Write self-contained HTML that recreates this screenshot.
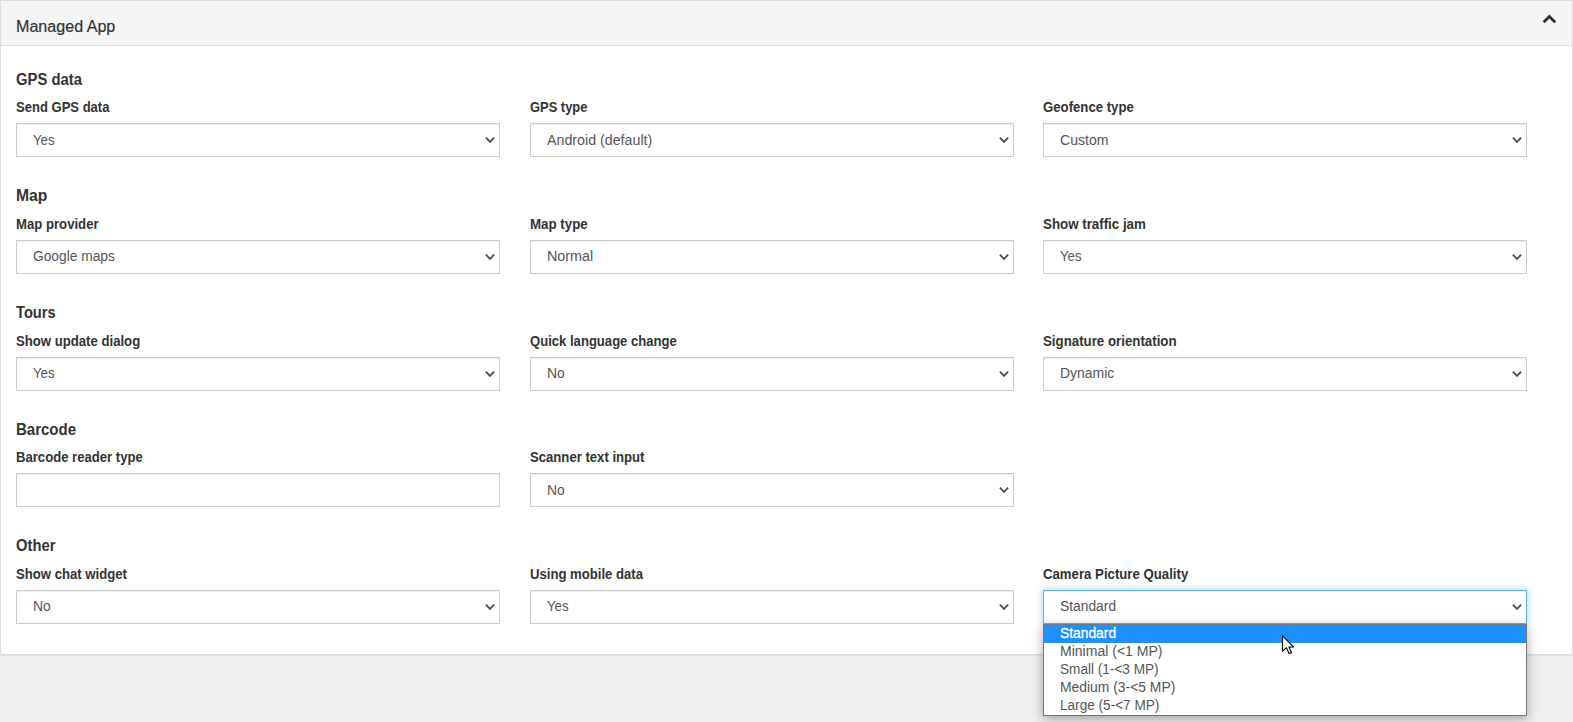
<!DOCTYPE html>
<html><head><meta charset="utf-8">
<style>
*{box-sizing:border-box;margin:0;padding:0}
html,body{width:1573px;height:722px;overflow:hidden;background:#efefef;font-family:"Liberation Sans",sans-serif;}
.panel{position:absolute;left:0;top:0;width:1573px;height:655px;background:#fff;border:1px solid #ddd;border-radius:0 0 2px 2px;box-shadow:0 1px 1px rgba(0,0,0,.05);}
.hd{position:absolute;left:1px;top:1px;width:1571px;height:45px;background:#f5f5f5;border-bottom:1px solid #ddd;}
.t{position:absolute;white-space:nowrap;color:#333;line-height:1;transform-origin:0 0;}
.title{font-size:16px;-webkit-text-stroke:.2px #333;}
.sec{font-size:16px;font-weight:bold;}
.lab{font-size:14px;font-weight:bold;}
.val{font-size:14px;color:#555;}
.opt{font-size:14px;color:#555;}
.optsel{font-size:14px;color:#fff;-webkit-text-stroke:.3px #fff;}
.sel{position:absolute;width:484px;height:34px;border:1px solid #ccc;background:#fff;box-shadow:inset 0 1px 1px rgba(0,0,0,.075);}
.sel.focus{border-color:#66afe9;box-shadow:inset 0 1px 1px rgba(0,0,0,.075),0 0 8px rgba(102,175,233,.6);}
.car{position:absolute;width:12px;height:8px;}
.dd{position:absolute;left:1043px;top:624px;width:484px;height:92px;background:#fff;border:1px solid #767676;box-shadow:0 3px 11px rgba(0,0,0,.33);}
.hl{position:absolute;left:1044px;top:625px;width:482px;height:18px;background:#1e90ff;}
</style></head><body>
<div class="panel"></div>
<div class="hd"></div>
<div class="t title" style="left:16px;top:19px;transform:scaleX(1.0056);">Managed App</div>
<svg style="position:absolute;left:1540px;top:12px" width="20" height="14" viewBox="1540 12 20 14"><path d="M1549.4 14.5 L1556.2 21.3 L1554.2 23.3 L1549.4 18.5 L1544.6 23.3 L1542.6 21.3 Z" fill="#333"/></svg>
<div class="t sec" style="left:16.3px;top:72px;transform:scaleX(0.9273);">GPS data</div>
<div class="t lab" style="left:16.3px;top:100px;transform:scaleX(0.9312);">Send GPS data</div>
<div class="sel" style="left:16px;top:123px"></div>
<div class="t val" style="left:33px;top:133px;transform:scaleX(0.9458);">Yes</div>
<svg class="car" style="left:484px;top:136px" viewBox="0 0 12 8"><path d="M1.9 1.7 L6 5.8 L10.1 1.7" fill="none" stroke="#505050" stroke-width="1.9"/></svg>
<div class="t lab" style="left:530.3px;top:100px;transform:scaleX(0.9223);">GPS type</div>
<div class="sel" style="left:530px;top:123px"></div>
<div class="t val" style="left:547px;top:133px;transform:scaleX(1.0171);">Android (default)</div>
<svg class="car" style="left:998px;top:136px" viewBox="0 0 12 8"><path d="M1.9 1.7 L6 5.8 L10.1 1.7" fill="none" stroke="#505050" stroke-width="1.9"/></svg>
<div class="t lab" style="left:1043.3px;top:100px;transform:scaleX(0.9415);">Geofence type</div>
<div class="sel" style="left:1043px;top:123px"></div>
<div class="t val" style="left:1060px;top:133px;transform:scaleX(1.0069);">Custom</div>
<svg class="car" style="left:1511px;top:136px" viewBox="0 0 12 8"><path d="M1.9 1.7 L6 5.8 L10.1 1.7" fill="none" stroke="#505050" stroke-width="1.9"/></svg>
<div class="t sec" style="left:16.3px;top:188px;transform:scaleX(0.9835);">Map</div>
<div class="t lab" style="left:16.3px;top:217px;transform:scaleX(0.9392);">Map provider</div>
<div class="sel" style="left:16px;top:240px"></div>
<div class="t val" style="left:33px;top:249px;transform:scaleX(0.9824);">Google maps</div>
<svg class="car" style="left:484px;top:253px" viewBox="0 0 12 8"><path d="M1.9 1.7 L6 5.8 L10.1 1.7" fill="none" stroke="#505050" stroke-width="1.9"/></svg>
<div class="t lab" style="left:530.3px;top:217px;transform:scaleX(0.9509);">Map type</div>
<div class="sel" style="left:530px;top:240px"></div>
<div class="t val" style="left:547px;top:249px;transform:scaleX(1.0248);">Normal</div>
<svg class="car" style="left:998px;top:253px" viewBox="0 0 12 8"><path d="M1.9 1.7 L6 5.8 L10.1 1.7" fill="none" stroke="#505050" stroke-width="1.9"/></svg>
<div class="t lab" style="left:1043.3px;top:217px;transform:scaleX(0.9510);">Show traffic jam</div>
<div class="sel" style="left:1043px;top:240px"></div>
<div class="t val" style="left:1060px;top:249px;transform:scaleX(0.9458);">Yes</div>
<svg class="car" style="left:1511px;top:253px" viewBox="0 0 12 8"><path d="M1.9 1.7 L6 5.8 L10.1 1.7" fill="none" stroke="#505050" stroke-width="1.9"/></svg>
<div class="t sec" style="left:16.3px;top:305px;transform:scaleX(0.9174);">Tours</div>
<div class="t lab" style="left:16.3px;top:334px;transform:scaleX(0.9391);">Show update dialog</div>
<div class="sel" style="left:16px;top:357px"></div>
<div class="t val" style="left:33px;top:366px;transform:scaleX(0.9458);">Yes</div>
<svg class="car" style="left:484px;top:370px" viewBox="0 0 12 8"><path d="M1.9 1.7 L6 5.8 L10.1 1.7" fill="none" stroke="#505050" stroke-width="1.9"/></svg>
<div class="t lab" style="left:530.3px;top:334px;transform:scaleX(0.9343);">Quick language change</div>
<div class="sel" style="left:530px;top:357px"></div>
<div class="t val" style="left:547px;top:366px;transform:scaleX(0.9936);">No</div>
<svg class="car" style="left:998px;top:370px" viewBox="0 0 12 8"><path d="M1.9 1.7 L6 5.8 L10.1 1.7" fill="none" stroke="#505050" stroke-width="1.9"/></svg>
<div class="t lab" style="left:1043.3px;top:334px;transform:scaleX(0.9486);">Signature orientation</div>
<div class="sel" style="left:1043px;top:357px"></div>
<div class="t val" style="left:1060px;top:366px;transform:scaleX(0.9971);">Dynamic</div>
<svg class="car" style="left:1511px;top:370px" viewBox="0 0 12 8"><path d="M1.9 1.7 L6 5.8 L10.1 1.7" fill="none" stroke="#505050" stroke-width="1.9"/></svg>
<div class="t sec" style="left:16.3px;top:422px;transform:scaleX(0.9380);">Barcode</div>
<div class="t lab" style="left:16.3px;top:450px;transform:scaleX(0.9364);">Barcode reader type</div>
<div class="sel" style="left:16px;top:473px"></div>
<div class="t lab" style="left:530.3px;top:450px;transform:scaleX(0.9373);">Scanner text input</div>
<div class="sel" style="left:530px;top:473px"></div>
<div class="t val" style="left:547px;top:483px;transform:scaleX(0.9936);">No</div>
<svg class="car" style="left:998px;top:486px" viewBox="0 0 12 8"><path d="M1.9 1.7 L6 5.8 L10.1 1.7" fill="none" stroke="#505050" stroke-width="1.9"/></svg>
<div class="t sec" style="left:16.3px;top:538px;transform:scaleX(0.9229);">Other</div>
<div class="t lab" style="left:16.3px;top:567px;transform:scaleX(0.9376);">Show chat widget</div>
<div class="sel" style="left:16px;top:590px"></div>
<div class="t val" style="left:33px;top:599px;transform:scaleX(0.9936);">No</div>
<svg class="car" style="left:484px;top:603px" viewBox="0 0 12 8"><path d="M1.9 1.7 L6 5.8 L10.1 1.7" fill="none" stroke="#505050" stroke-width="1.9"/></svg>
<div class="t lab" style="left:530.3px;top:567px;transform:scaleX(0.9371);">Using mobile data</div>
<div class="sel" style="left:530px;top:590px"></div>
<div class="t val" style="left:547px;top:599px;transform:scaleX(0.9458);">Yes</div>
<svg class="car" style="left:998px;top:603px" viewBox="0 0 12 8"><path d="M1.9 1.7 L6 5.8 L10.1 1.7" fill="none" stroke="#505050" stroke-width="1.9"/></svg>
<div class="t lab" style="left:1043.3px;top:567px;transform:scaleX(0.9426);">Camera Picture Quality</div>
<div class="sel focus" style="left:1043px;top:590px"></div>
<div class="t val" style="left:1060px;top:599px;transform:scaleX(0.9869);">Standard</div>
<svg class="car" style="left:1511px;top:603px" viewBox="0 0 12 8"><path d="M1.9 1.7 L6 5.8 L10.1 1.7" fill="none" stroke="#505050" stroke-width="1.9"/></svg>
<div class="dd"></div><div class="hl"></div>
<div class="t optsel" style="left:1060px;top:625.5px;transform:scaleX(0.9869);">Standard</div>
<div class="t opt" style="left:1060px;top:643.5px;transform:scaleX(1.0020);">Minimal (&lt;1 MP)</div>
<div class="t opt" style="left:1060px;top:661.5px;transform:scaleX(0.9717);">Small (1-&lt;3 MP)</div>
<div class="t opt" style="left:1060px;top:679.5px;transform:scaleX(0.9910);">Medium (3-&lt;5 MP)</div>
<div class="t opt" style="left:1060px;top:697.5px;transform:scaleX(0.9710);">Large (5-&lt;7 MP)</div>
<svg style="position:absolute;left:1281px;top:633px" width="15" height="23" viewBox="-1.5 -2.8 15 23"><path d="M0 0 L0 15.3 L3.9 12 L6.6 17.8 L8.9 16.9 L6.5 11.3 L10.9 11 Z" fill="#fff" stroke="#000" stroke-width="1.1" stroke-linejoin="miter"/></svg>
</body></html>
